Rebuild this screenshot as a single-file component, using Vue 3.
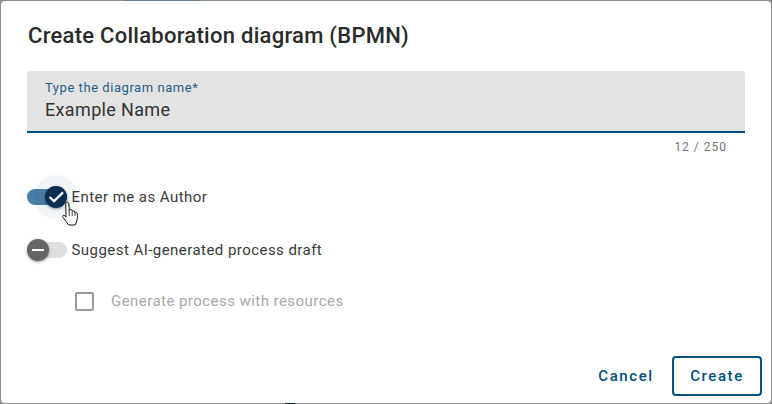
<script setup>
const toggles = [
  { label: 'Enter me as Author', on: true },
  { label: 'Suggest AI-generated process draft', on: false },
]
</script>

<template>
  <div class="screen">
    <div class="topstrip"></div>
    <section class="dialog">
      <h2 class="title">Create Collaboration diagram (BPMN)</h2>
      <div class="field">
        <span class="field-label">Type the diagram name*</span>
        <span class="field-value">Example Name</span>
      </div>
      <div class="counter">12 / 250</div>
      <div class="toggles">
        <div v-for="t in toggles" :key="t.label" class="toggle-row">
          <div class="switch" :class="{ on: t.on }">
            <span class="track"></span>
            <span v-if="t.on" class="halo"></span>
            <span class="thumb">
              <svg v-if="t.on" width="22" height="22" viewBox="0 0 22 22">
                <path d="M4.600 11 L9 15.200 L18 6.400" fill="none" stroke="#fff" stroke-width="2.300" />
              </svg>
              <span v-else class="dash"></span>
            </span>
            <svg v-if="t.on" class="cursor" width="18" height="26" viewBox="0 0 18 26">
              <path d="M4.200 1.500c1-.8 2.500-.2 2.700 1.100L7.200 9.500l.3-.5c.8-1 2.300-.7 2.600.5l.1.800c.8-.9 2.300-.5 2.500.6l.1.700c.9-.7 2.300-.2 2.500 1 .4 2.700.1 5.300-.5 7.200-.4 1.500-1.100 2.900-1.700 4.200H6.500c-1-1.500-2.300-3.400-3.500-5L1 16.500c-1-1.400.5-2.800 1.700-1.900L4 16 3.700 3c0-.6.100-1.100.5-1.500Z" fill="#fff" stroke="#111" stroke-width="1" stroke-linejoin="round" />
              <path d="M7.200 9.500v5.500M10.200 10.300v4.700M13 11.600v3.400" fill="none" stroke="#111" stroke-width=".8" />
            </svg>
          </div>
          <span class="toggle-label">{{ t.label }}</span>
        </div>
      </div>
      <label class="check-row">
        <span class="box"></span>
        <span class="check-label">Generate process with resources</span>
      </label>
      <footer class="actions">
        <button class="btn text">Cancel</button>
        <button class="btn outline">Create</button>
      </footer>
    </section>
    <div class="bottomstrip"></div>
  </div>
</template>

<style>
body { margin: 0; }
</style>

<style scoped>
.screen {
  position: relative;
  width: 772px;
  height: 404px;
  box-sizing: border-box;
  padding: 1px;
  background: #8c8c8c;
  overflow: hidden;
  font-family: Roboto, "Liberation Sans", sans-serif;
}
.topstrip {
  position: absolute;
  left: 125px;
  top: 0;
  width: 74px;
  height: 1px;
  background: #5f7f99;
}
.bottomstrip {
  position: absolute;
  left: 285px;
  bottom: 0;
  width: 10px;
  height: 1px;
  background: #10202e;
}
.dialog {
  box-sizing: border-box;
  height: 402px;
  background: #fff;
  border-radius: 4px;
  padding: 0 26px;
  display: flex;
  flex-direction: column;
}
.title {
  margin: 20px 0 0;
  padding-left: 1px;
  font-size: 22px;
  line-height: 30px;
  font-weight: 500;
  letter-spacing: .27px;
  color: #2a2a2a;
}
.field {
  margin-top: 20px;
  width: 718px;
  height: 62px;
  box-sizing: border-box;
  background: #e3e3e3;
  border-radius: 4px 4px 0 0;
  border-bottom: 2px solid #004f7f;
  padding: 9px 18px 0;
  display: flex;
  flex-direction: column;
}
.field-label {
  font-size: 13px;
  line-height: 16px;
  letter-spacing: .55px;
  color: #1f5f8b;
}
.field-value {
  font-size: 18px;
  line-height: 27px;
  letter-spacing: .35px;
  color: #333;
}
.counter {
  width: 700px;
  margin-top: 6px;
  text-align: right;
  font-size: 12px;
  line-height: 16px;
  letter-spacing: 1px;
  color: #757575;
}
.toggles {
  margin-top: 30px;
  display: flex;
  flex-direction: column;
  gap: 29px;
}
.toggle-row {
  display: flex;
  align-items: center;
  height: 24px;
}
.switch {
  position: relative;
  width: 40px;
  height: 24px;
  margin-right: 4.500px;
  flex: none;
}
.track {
  position: absolute;
  left: 0;
  top: 4px;
  width: 40px;
  height: 16px;
  border-radius: 8px;
  background: #dedede;
}
.on .track { background: #4b7fa6; }
.halo {
  position: absolute;
  left: 7px;
  top: -10px;
  width: 44px;
  height: 44px;
  border-radius: 50%;
  background: rgba(0, 79, 127, .06);
}
.thumb {
  position: absolute;
  left: 0;
  top: 1px;
  width: 22px;
  height: 22px;
  border-radius: 50%;
  background: #666;
  box-shadow: 0 1px 3px rgba(0, 0, 0, .4);
  display: flex;
  align-items: center;
  justify-content: center;
}
.on .thumb {
  left: 18px;
  background: #0a2e52;
}
.dash {
  width: 12px;
  height: 2px;
  background: #fff;
}
.cursor {
  position: absolute;
  left: 35px;
  top: 16px;
}
.toggle-label {
  font-size: 15px;
  line-height: 20px;
  letter-spacing: .45px;
  color: #3a3a3a;
}
.check-row {
  margin: 27px 0 0 48px;
  display: flex;
  align-items: center;
  height: 24px;
}
.box {
  width: 19px;
  height: 19px;
  box-sizing: border-box;
  border: 2px solid #9a9a9a;
  border-radius: 2px;
  margin-right: 17px;
}
.check-label {
  font-size: 15px;
  line-height: 20px;
  letter-spacing: .45px;
  color: #a8a8a8;
}
.actions {
  margin-top: auto;
  margin-bottom: 7px;
  margin-right: -17px;
  display: flex;
  justify-content: flex-end;
  align-items: center;
  gap: 8px;
}
.btn {
  height: 40px;
  border-radius: 4px;
  background: #fff;
  font-family: inherit;
  font-size: 15px;
  font-weight: 500;
  letter-spacing: 1.6px;
  color: #004f7f;
  padding: 0;
}
.text {
  border: none;
  width: 76px;
}
.outline {
  width: 90px;
  border: 2px solid #004f7f;
}
</style>
